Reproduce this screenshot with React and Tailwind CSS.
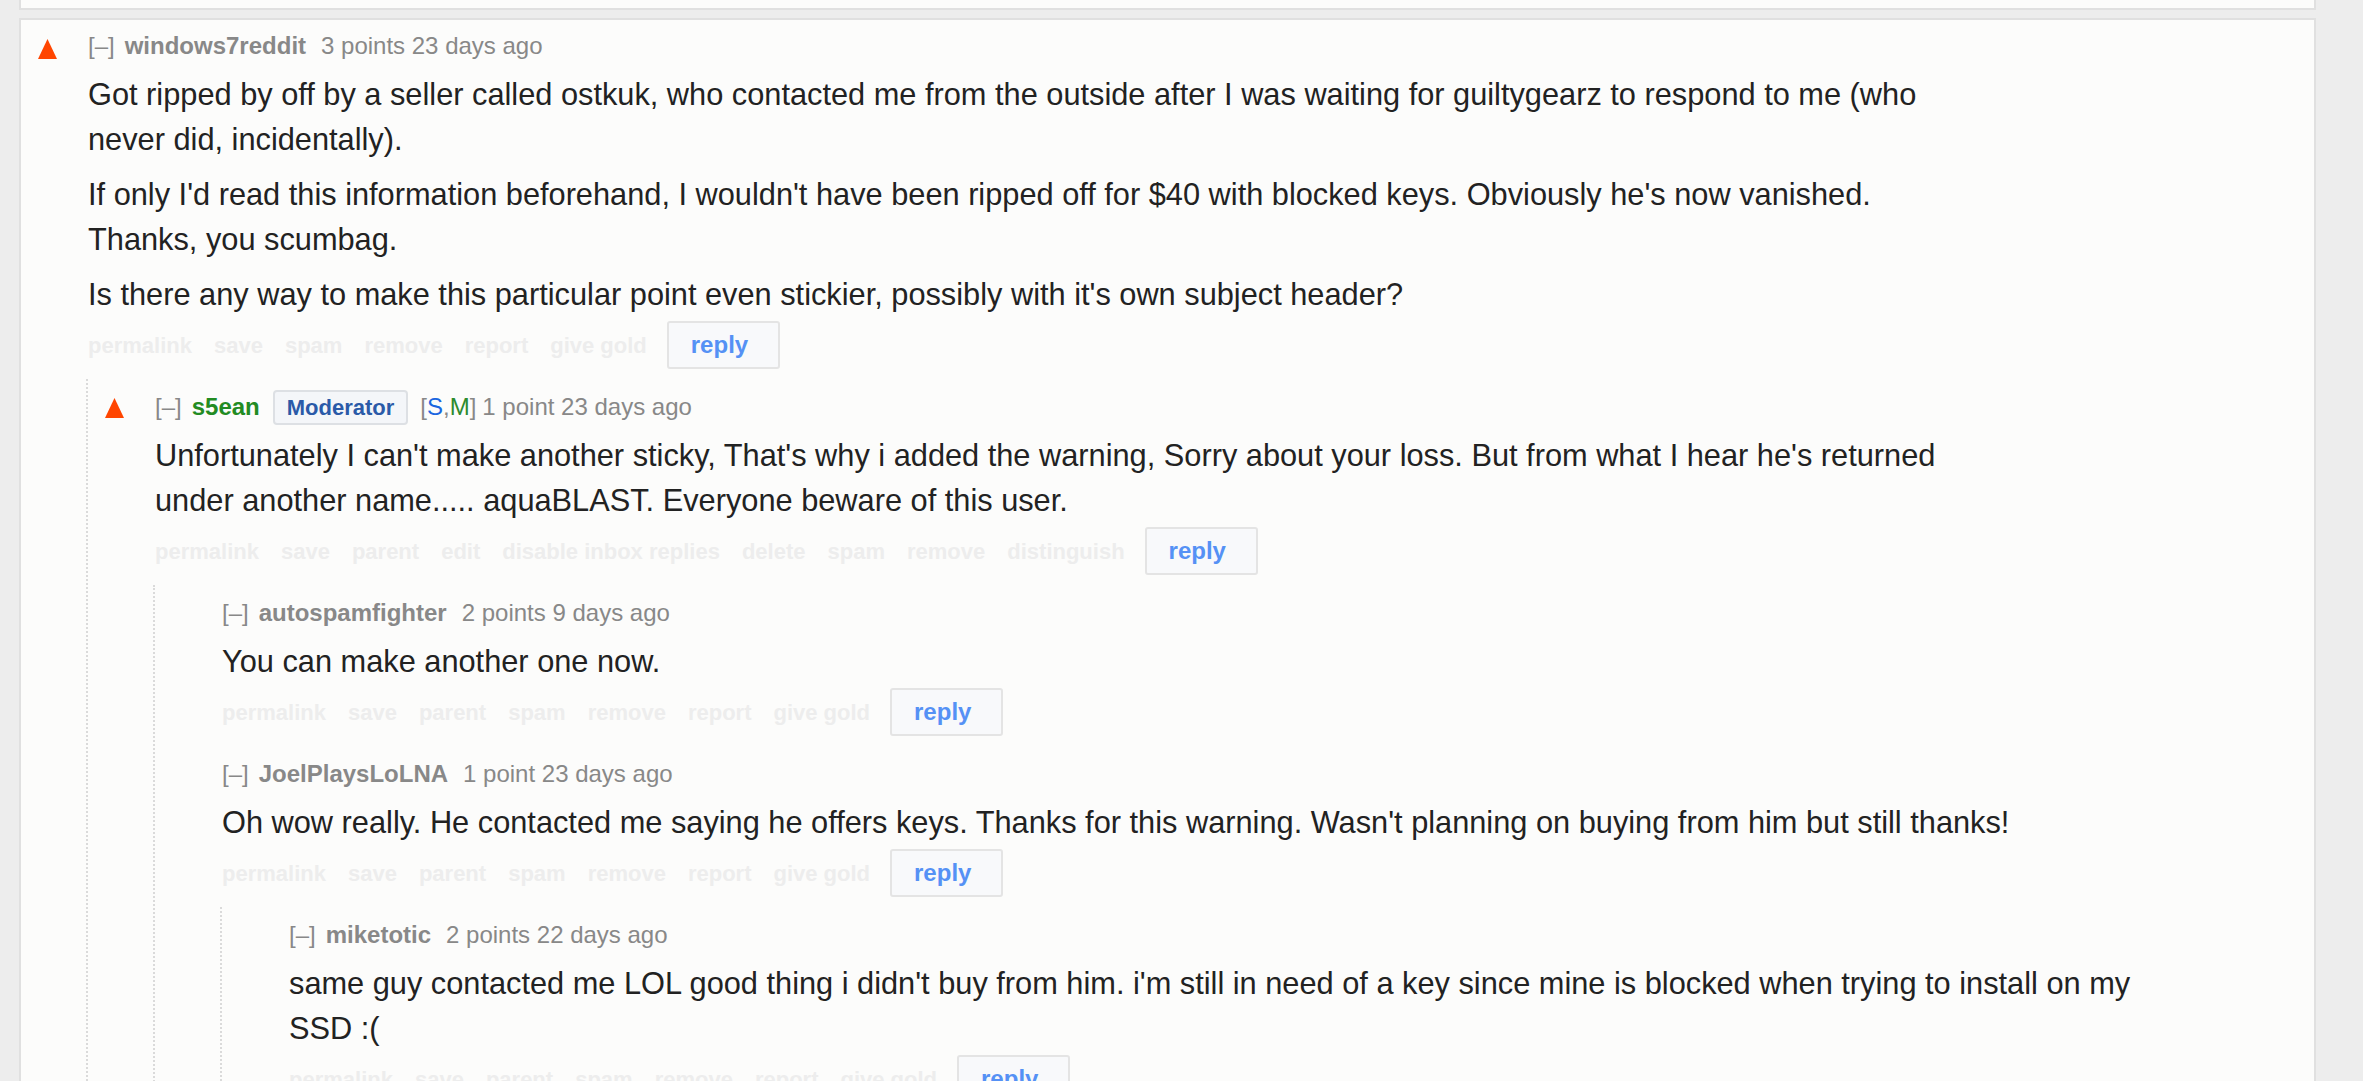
import React from 'react';

const thread = {
  author: 'windows7reddit',
  score: '3 points 23 days ago',
  arrow: true,
  body: [
    [
      'Got ripped by off by a seller called ostkuk, who contacted me from the outside after I was waiting for guiltygearz to respond to me (who',
      'never did, incidentally).',
    ],
    [
      "If only I'd read this information beforehand, I wouldn't have been ripped off for $40 with blocked keys. Obviously he's now vanished.",
      'Thanks, you scumbag.',
    ],
    ["Is there any way to make this particular point even stickier, possibly with it's own subject header?"],
  ],
  actions: ['permalink', 'save', 'spam', 'remove', 'report', 'give gold'],
  children: [
    {
      author: 's5ean',
      mod: true,
      score: '1 point 23 days ago',
      arrow: true,
      arrowTop: 'pt-[6px]',
      body: [
        [
          "Unfortunately I can't make another sticky, That's why i added the warning, Sorry about your loss. But from what I hear he's returned",
          'under another name..... aquaBLAST. Everyone beware of this user.',
        ],
      ],
      actions: ['permalink', 'save', 'parent', 'edit', 'disable inbox replies', 'delete', 'spam', 'remove', 'distinguish'],
      children: [
        {
          author: 'autospamfighter',
          score: '2 points 9 days ago',
          body: [['You can make another one now.']],
          actions: ['permalink', 'save', 'parent', 'spam', 'remove', 'report', 'give gold'],
        },
        {
          author: 'JoelPlaysLoLNA',
          score: '1 point 23 days ago',
          body: [
            ["Oh wow really. He contacted me saying he offers keys. Thanks for this warning. Wasn't planning on buying from him but still thanks!"],
          ],
          actions: ['permalink', 'save', 'parent', 'spam', 'remove', 'report', 'give gold'],
          children: [
            {
              author: 'miketotic',
              score: '2 points 22 days ago',
              body: [
                [
                  "same guy contacted me LOL good thing i didn't buy from him. i'm still in need of a key since mine is blocked when trying to install on my",
                  'SSD :(',
                ],
              ],
              actions: ['permalink', 'save', 'parent', 'spam', 'remove', 'report', 'give gold'],
            },
          ],
        },
      ],
    },
  ],
};

const UpArrow = () => (
  <svg width="19" height="20" viewBox="0 0 19 20" className="block">
    <polygon points="0,20 9.5,0 19,20" fill="#ff4500" />
  </svg>
);

const Tagline = ({ c }) => (
  <div className="flex h-[30px] items-center whitespace-nowrap text-[24px] text-[#888]">
    <span className="mr-[10px]">[–]</span>
    {c.mod ? (
      <>
        <span className="font-bold text-[#228b22]">{c.author}</span>
        <span className="ml-[13px] flex h-[35px] items-center rounded-[4px] border-2 border-[#dde0e4] bg-[#f4f6f9] px-[12px] text-[22px] font-bold text-[#2a5aa8]">
          Moderator
        </span>
        <span className="ml-[12px]">
          [<span className="text-[#1a66e0]">S</span>,<span className="text-[#2e8b2e]">M</span>]
        </span>
        <span className="ml-[6px]">{c.score}</span>
      </>
    ) : (
      <>
        <span className="font-bold">{c.author}</span>
        <span className="ml-[15px]">{c.score}</span>
      </>
    )}
  </div>
);

const Actions = ({ items }) => (
  <div className="mb-[10px] flex items-center whitespace-nowrap">
    {items.map((a) => (
      <span key={a} className="mr-[22px] text-[22px] font-bold text-[#ededed]">
        {a}
      </span>
    ))}
    <button className="-ml-[2px] h-[48px] w-[113px] rounded-[3px] border-2 border-[#e4e4e4] bg-[#f8f9fb] pl-[22px] text-left text-[24px] font-bold text-[#5591f5]">
      reply
    </button>
  </div>
);

const Comment = ({ c, first }) => (
  <div className={first ? 'pt-[11px]' : 'pt-[13px]'}>
    <div className="flex">
      <div className={`w-[50px] shrink-0 ${c.arrowTop || 'pt-[8px]'}`}>{c.arrow && <UpArrow />}</div>
      <div className="min-w-0 flex-1">
        <Tagline c={c} />
        <div className="flex flex-col gap-[10px] pb-[4px] pt-[11px] text-[30.75px] leading-[45px] text-[#222] whitespace-nowrap">
          {c.body.map((p, i) => (
            <p key={i}>
              {p.map((line, j) => (
                <React.Fragment key={j}>
                  {j > 0 && <br />}
                  {line}
                </React.Fragment>
              ))}
            </p>
          ))}
        </div>
        <Actions items={c.actions} />
        {c.children && (
          <div className="-ml-[2px] border-l-2 border-dotted border-[#dadada] pl-[17px]">
            {c.children.map((child) => (
              <Comment key={child.author} c={child} />
            ))}
          </div>
        )}
      </div>
    </div>
  </div>
);

export default function App() {
  return (
    <div className="h-[1081px] w-full overflow-hidden bg-[#ededed] pl-[19px] pr-[47px] font-['Liberation_Sans',Arial,sans-serif]">
      <div className="h-[10px] border-x-2 border-b-2 border-[#e0e0e0] bg-[#fcfcfb]" />
      <div className="mt-[8px] min-h-[1100px] border-x-2 border-t-2 border-[#e0e0e0] bg-[#fcfcfb] pl-[17px]">
        <Comment c={thread} first />
      </div>
    </div>
  );
}
